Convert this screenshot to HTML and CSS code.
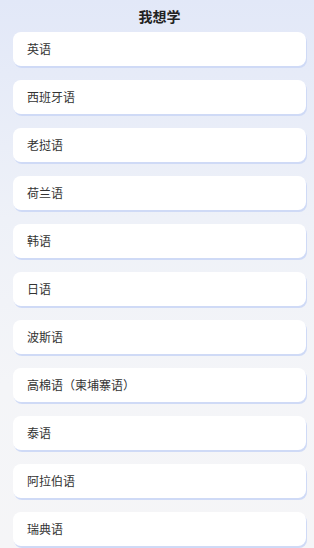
FILE: index.html
```html
<!DOCTYPE html>
<html>
<head>
<meta charset="utf-8">
<link rel="stylesheet" href="styles.css">
</head>
<body>
<div class="page">
  <h1 class="title">我想学</h1>
  <ul class="list">
    <li class="item">英语</li>
    <li class="item">西班牙语</li>
    <li class="item">老挝语</li>
    <li class="item">荷兰语</li>
    <li class="item">韩语</li>
    <li class="item">日语</li>
    <li class="item">波斯语</li>
    <li class="item">高棉语（柬埔寨语）</li>
    <li class="item">泰语</li>
    <li class="item">阿拉伯语</li>
    <li class="item">瑞典语</li>
  </ul>
</div>
</body>
</html>
```
FILE: styles.css
```css
html, body {
  margin: 0;
  padding: 0;
  height: 100%;
}
body {
  background: linear-gradient(180deg, #e2e8f8 0%, #eef1f8 40%, #f4f5f8 70%, #f5f5f7 100%);
  font-family: "Noto Sans CJK SC", "Noto Sans", sans-serif;
  overflow: hidden;
}
.page {
  padding: 0 8px 0 13px;
}
.title {
  margin: 0;
  height: 32px;
  line-height: 32px;
  text-align: center;
  font-size: 14px;
  font-weight: 700;
  color: #222;
  box-sizing: border-box;
  padding-bottom: 1px;
}
.list {
  list-style: none;
  margin: 0;
  padding: 0;
  display: flex;
  flex-direction: column;
  gap: 14px;
}
.item {
  height: 34px;
  box-sizing: border-box;
  background: #fff;
  border-radius: 8px;
  box-shadow: 1px 2px 0 #cfdaf6;
  padding: 0 0 2px 14px;
  display: flex;
  align-items: center;
  font-size: 12px;
  color: #333;
}
```
